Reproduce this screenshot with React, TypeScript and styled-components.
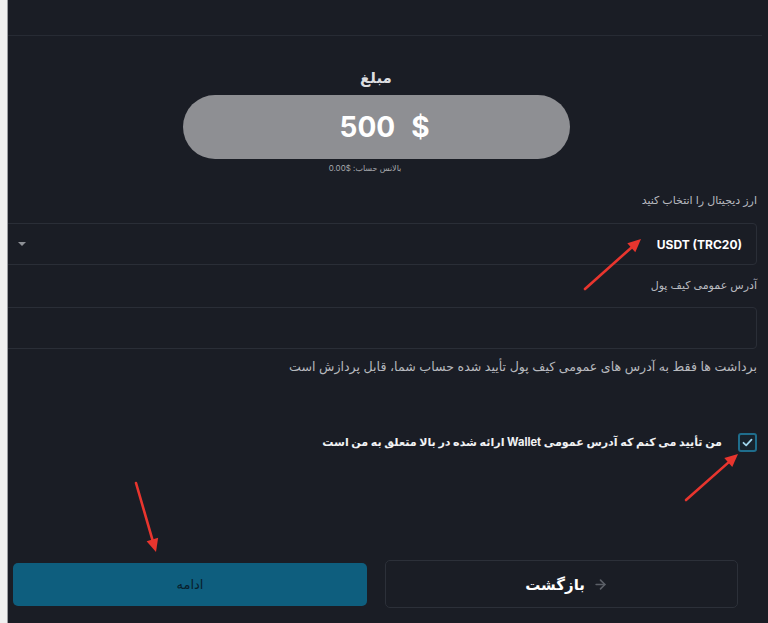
import React from "react";
import styled, { createGlobalStyle } from "styled-components";
import { ArrowRight } from "lucide-react";

const GlobalStyle = createGlobalStyle`
  html, body { margin: 0; padding: 0; background: #f2f2f2; }
  body { font-family: Inter, "DejaVu Sans", sans-serif; }
  * { box-sizing: border-box; }
`;

const Screen = styled.div`
  display: flex;
  width: 768px;
  height: 623px;
  overflow: hidden;
  position: relative;
  background: #f2f2f2;
`;

const Gutter = styled.div`
  width: 8px;
  flex: none;
  background: #f0f0f0;
  border-right: 1px solid #9a9ca0;
`;

const Panel = styled.main`
  flex: 1;
  background: #1a1d25;
  direction: rtl;
  display: flex;
  flex-direction: column;
  overflow: hidden;
`;

const TopBar = styled.div`
  height: 36px;
  flex: none;
  border-bottom: 1px solid #272b34;
  margin-right: 6px;
`;

const AmountBlock = styled.section`
  display: flex;
  flex-direction: column;
  align-items: center;
  padding-right: 24px;
  margin-top: 32px;
`;

const AmountTitle = styled.div`
  color: #dcdde0;
  font-size: 15px;
  line-height: 20px;
  font-weight: 600;
`;

const AmountPill = styled.div`
  margin-top: 7px;
  width: 387px;
  height: 64px;
  border-radius: 32px;
  background: #8e8f93;
  display: flex;
  align-items: center;
  justify-content: center;
  direction: ltr;
  gap: 16px;
  color: #ffffff;
  font-size: 28px;
  font-weight: 700;
  padding-left: 17px;
`;

const Balance = styled.div`
  margin-top: 3px;
  margin-right: 22px;
  color: #a7a9ad;
  font-size: 8px;
  line-height: 12px;
`;

const Fields = styled.section`
  display: flex;
  flex-direction: column;
  padding-right: 11px;
  margin-left: -12px;
`;

const FieldLabel = styled.label<{ $top: number }>`
  display: block;
  margin-top: ${(p) => p.$top}px;
  color: #b9bbc0;
  font-size: 11px;
  line-height: 14px;
`;

const Box = styled.div<{ $top: number }>`
  margin-top: ${(p) => p.$top}px;
  height: 42px;
  border: 1px solid #2a2e37;
  border-radius: 4px;
  display: flex;
  align-items: center;
  justify-content: space-between;
  padding: 0 14px 0 21px;
`;

const SelectValue = styled.span`
  direction: ltr;
  color: #ffffff;
  font-size: 12px;
  font-weight: 700;
`;

const Caret = styled.span`
  width: 0;
  height: 0;
  border-left: 4px solid transparent;
  border-right: 4px solid transparent;
  border-top: 4px solid #8d9096;
`;

const Hint = styled.p`
  margin: 10px 0 0;
  color: #b7b9be;
  font-size: 12.6px;
  line-height: 16px;
`;

const ConfirmRow = styled.label`
  display: flex;
  align-items: center;
  gap: 16px;
  margin-top: 57px;
  padding-right: 11px;
`;

const CheckBox = styled.span`
  width: 19px;
  height: 19px;
  flex: none;
  border: 2px solid #1f6d8c;
  border-radius: 3px;
  display: flex;
  align-items: center;
  justify-content: center;
  background: #17222c;
`;

const ConfirmText = styled.span`
  color: #f1f2f4;
  font-size: 11.1px;
  font-weight: 700;
  line-height: 20px;
`;

const Actions = styled.div`
  display: flex;
  align-items: center;
  gap: 18px;
  margin-top: 108px;
  padding-right: 30px;
  padding-left: 4px;
`;

const BackButton = styled.button`
  width: 353px;
  height: 48px;
  border: 1px solid #2c3039;
  border-radius: 5px;
  background: #1a1d25;
  display: flex;
  align-items: center;
  justify-content: center;
  gap: 8px;
  color: #ffffff;
  font-family: inherit;
  font-size: 15px;
  font-weight: 700;
  padding: 0 0 0 10px;
`;

const ContinueButton = styled.button`
  width: 354px;
  height: 43px;
  border: none;
  border-radius: 5px;
  background: #0e5e7e;
  color: #08202c;
  font-family: inherit;
  font-size: 13px;
  font-weight: 500;
`;

const Annotations = styled.svg`
  position: absolute;
  inset: 0;
  pointer-events: none;
`;

type Pointer = { x1: number; y1: number; x2: number; y2: number };

const pointers: Pointer[] = [
  { x1: 585, y1: 289, x2: 641, y2: 239 },
  { x1: 686, y1: 500, x2: 738, y2: 454 },
  { x1: 136, y1: 483, x2: 156, y2: 552 },
];

function RedArrow({ x1, y1, x2, y2 }: Pointer) {
  const a = Math.atan2(y2 - y1, x2 - x1);
  const len = 13;
  const w = 6;
  const bx = x2 - len * Math.cos(a);
  const by = y2 - len * Math.sin(a);
  const px = -Math.sin(a) * w;
  const py = Math.cos(a) * w;
  return (
    <g>
      <line x1={x1} y1={y1} x2={bx} y2={by} stroke="#e8352e" strokeWidth={2.6} strokeLinecap="round" />
      <polygon points={`${x2},${y2} ${bx + px},${by + py} ${bx - px},${by - py}`} fill="#e8352e" />
    </g>
  );
}

export default function App() {
  return (
    <>
      <GlobalStyle />
      <Screen>
        <Gutter />
        <Panel>
          <TopBar />
          <AmountBlock>
            <AmountTitle>مبلغ</AmountTitle>
            <AmountPill>
              <span>500</span>
              <span>$</span>
            </AmountPill>
            <Balance>
              بالانس حساب: <bdi dir="ltr">0.00$</bdi>
            </Balance>
          </AmountBlock>
          <Fields>
            <FieldLabel $top={19}>ارز دیجیتال را انتخاب کنید</FieldLabel>
            <Box $top={16}>
              <SelectValue>USDT (TRC20)</SelectValue>
              <Caret />
            </Box>
            <FieldLabel $top={13}>آدرس عمومی کیف پول</FieldLabel>
            <Box $top={15} />
            <Hint>برداشت ها فقط به آدرس های عمومی کیف پول تأیید شده حساب شما، قابل پردازش است</Hint>
          </Fields>
          <ConfirmRow>
            <CheckBox>
              <svg width="11" height="9" viewBox="0 0 11 9">
                <path d="M1.5 4.8 L4.2 7.3 L9.5 1.6" fill="none" stroke="#9fd3ea" strokeWidth="1.8" strokeLinecap="round" strokeLinejoin="round" />
              </svg>
            </CheckBox>
            <ConfirmText>من تأیید می کنم که آدرس عمومی Wallet ارائه شده در بالا متعلق به من است</ConfirmText>
          </ConfirmRow>
          <Actions>
            <BackButton>
              <ArrowRight size={15} color="#5b5f67" strokeWidth={2.6} />
              <span>بازگشت</span>
            </BackButton>
            <ContinueButton>ادامه</ContinueButton>
          </Actions>
        </Panel>
        <Annotations width={768} height={623} viewBox="0 0 768 623">
          {pointers.map((p, i) => (
            <RedArrow key={i} {...p} />
          ))}
        </Annotations>
      </Screen>
    </>
  );
}
